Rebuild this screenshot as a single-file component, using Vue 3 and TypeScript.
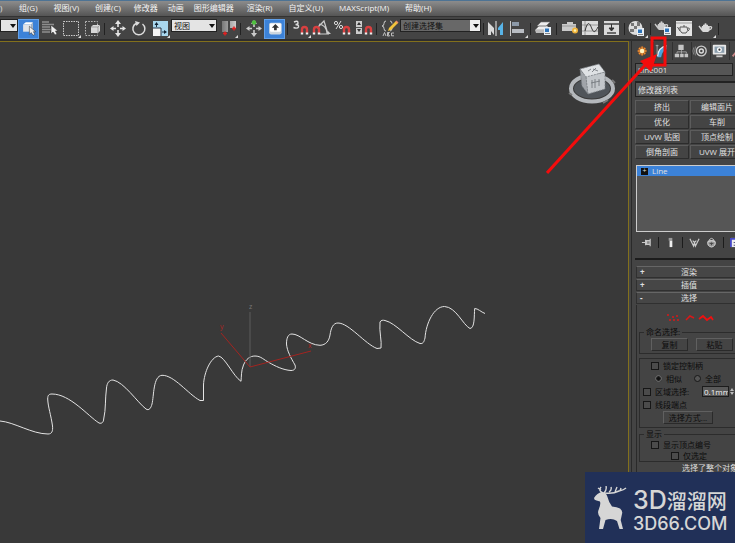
<script setup lang="ts">
import { ref } from 'vue'

interface Tool {
  kind: 'tool' | 'sep' | 'select'
  name?: string
  label?: string
  icon?: string
  active?: boolean
  flyout?: boolean
  options?: string[]
}

const menus = ['组(G)', '视图(V)', '创建(C)', '修改器', '动画', '图形编辑器', '渲染(R)', '自定义(U)', 'MAXScript(M)', '帮助(H)']

const cursor = (x: number, y: number) =>
  `<path transform="translate(${x} ${y})" d="M0 0V9L2 7L4 10L6 9L4.500 6H7Z" fill="#eee" stroke="#333" stroke-width=".6"/>`
const magnet = (x: number, y: number) =>
  `<g transform="translate(${x} ${y})" fill="none"><path d="M1 7V3.500Q1 1 3.500 1T6 3.500V7" stroke="#d84040" stroke-width="2.400"/><path d="M1 6.500V8.500M6 6.500V8.500" stroke="#eee" stroke-width="2.400"/></g>`
const teapot = (x: number, y: number, c: string) =>
  `<g transform="translate(${x} ${y})"><path d="M3 4H10Q12 8 9 10H4Q1 8 3 4Z" fill="${c}"/><path d="M3 8L0 4M10 5Q14 4 12 7L10 8M4 3.500H9" fill="none" stroke="${c}" stroke-width="1.300"/><circle cx="6.500" cy="2.300" r="1.100" fill="${c}"/></g>`
const badge = (x: number, y: number) =>
  `<g transform="translate(${x} ${y})"><rect width="7" height="8" fill="#e8eef4"/><rect x="1" y="1.500" width="4" height="3.500" fill="#2e74b8"/><path d="M1 6.500H6" stroke="#888"/></g>`
const moveArrows = (c: string) =>
  `<path d="M11 5V8M11 11V14M6 9.500H9M13 9.500H16" stroke="${c}" stroke-width="1.600"/><path d="M11 1L14 5H8ZM11 18L14 14H8ZM3 9.500L6.500 7V12ZM19 9.500L15.500 7V12Z" fill="${c}"/>`

const icons: Record<string, string> = {
  pick: `<path d="M4 5L7 2.500H15L13 5Z" fill="#fff"/><path d="M4 5H13V13H4Z" fill="#dfe3e8"/><path d="M13 5L15 2.500V11L13 13Z" fill="#a9b6c4"/>${cursor(11, 7)}`,
  list: `<path d="M3 3H10M3 5.500H15M3 8H11M3 10.500H13M3 13H11" stroke="#8e8e8e" stroke-width="1.300"/>${cursor(12, 6)}`,
  region: `<rect x="3.500" y="2.500" width="15" height="14" fill="none" stroke="#ccc" stroke-dasharray="1.500 1"/>`,
  crossing: `<rect x="4.500" y="2.500" width="12" height="14" fill="none" stroke="#bbb" stroke-dasharray="1.500 1.300"/><path d="M10 8L12 6H19V12L17 14H10Z" fill="#d8d8d8"/><path d="M10 8H17V14M17 8L19 6" fill="none" stroke="#888" stroke-width=".7"/>`,
  move: moveArrows('#e4e4e4'),
  rotate: `<path d="M14.500 5A6 6 0 1 1 8 4.500" fill="none" stroke="#ddd" stroke-width="1.500"/><path d="M7 2L12 3.500L8.500 7Z" fill="#ddd"/>`,
  scale: `<rect x="4" y="2" width="15" height="15" fill="#a9d7ee"/><rect x="4" y="9" width="8" height="8" fill="#f4f4f4"/><path d="M4 9H12V17M7.500 8V5M13 13H16" fill="none" stroke="#234" stroke-width="1"/><path d="M7.500 3L9.500 6H5.500ZM18 13L15 11V15Z" fill="#123"/>`,
  pivot: `<defs><linearGradient id="pv"><stop stop-color="#777"/><stop offset="1" stop-color="#ccc"/></linearGradient></defs><path d="M5 2H11V13H5ZM13 2H19V9H13Z" fill="url(#pv)"/><path d="M8 12.500V16.500M6 14.500H10M17 7.500V11.500M15 9.500H19" stroke="#e02020" stroke-width="1.500"/>`,
  manipulate: `${moveArrows('#ccc')}<circle cx="11" cy="3.500" r="2.300" fill="#4fbf3f"/>`,
  keyboard: `<rect x="4" y="3" width="14" height="13" rx="2" fill="#ccd6df"/><rect x="5" y="4" width="12" height="9" rx="1" fill="#fff"/><path d="M11 4.500L15 8.500H12.500V11.500H9.500V8.500H7Z" fill="#333"/>`,
  snap3: `<path d="M4 3Q8 1 8 4Q8 5.500 5.500 5.500Q9 5.500 8.500 8Q7.500 10 3.500 8.500" fill="none" stroke="#ddd" stroke-width="1.400"/>${magnet(11, 7)}`,
  snapAngle: `<path d="M6 9L13 2L17 15M9 15H18M8 5Q15 6 16 14" fill="none" stroke="#ccc" stroke-width="1.200"/><path d="M15 15L20 15L17 12Z" fill="#ccc"/>${magnet(2, 7)}`,
  snapPercent: `<circle cx="4" cy="4" r="1.600" fill="none" stroke="#ddd"/><circle cx="9" cy="8" r="1.600" fill="none" stroke="#ddd"/><path d="M9 2L4 10" stroke="#ddd"/>${magnet(11, 7)}`,
  snapSpinner: `<rect x="3" y="2" width="6" height="13" fill="#ccc"/><path d="M6 3L8 6H4ZM6 13L8 10H4Z" fill="#333"/><path d="M3 8.500H9" stroke="#555"/>${magnet(12, 7)}`,
  sets: `<path d="M7 2Q5 2 5 4.500T3 7Q5 7 5 9.500T7 12M11 2Q13 2 13 4.500M11 12Q13 12 13 9" fill="none" stroke="#ccc"/><path d="M10 9L17 2L19 4L12 11L9 12Z" fill="#f0c23c"/><path d="M17 2L19 4" stroke="#e86" stroke-width="1.500"/><path d="M4 17L5.500 13.500L7 17M8.500 13.500V17H10.500L9 15L10.500 13.500H8.500M15 14H12.500V16.800H15" fill="none" stroke="#ccc" stroke-width=".9"/>`,
  mirror: `<path d="M2 3L8 9V16L5 12V16H2Z" fill="#d9d9d9"/><path d="M17 3L12 9V11H14V16H17Z" fill="#58b4e8"/><path d="M10 2V17" stroke="#eee"/>`,
  align: `<path d="M3.500 2V17" stroke="#ccc"/><path d="M5 3H12V7H5Z" fill="#8c99a8"/><path d="M5 10H17V14H5Z" fill="#b8bcc2"/>`,
  layers: `<path d="M8 3H17L13 7H4ZM6 7H15L11 11H2Z" fill="#eee" stroke="#777" stroke-width=".6"/><path d="M2 11L11 11L15 7V10L11 14H3Z" fill="#bbb"/>${badge(11, 8)}`,
  ribbon: `<path d="M3 5H8V3H14V5H17V12H3Z" fill="#c9c9c9"/><path d="M3 7H17" stroke="#999"/><circle cx="16" cy="11.500" r="3" fill="#f0b43c"/><circle cx="16" cy="11.500" r="1.200" fill="#fff4b0"/>`,
  curves: `<rect x="2" y="2" width="16" height="14" fill="#dcdcdc"/><path d="M5 2V16M2 6H18M2 12H18" stroke="#888" stroke-width=".8"/><path d="M5 12C8 0 10 5 12 10S16 12 18 8" fill="none" stroke="#333"/>`,
  schematic: `<rect x="3" y="2" width="15" height="14" fill="#dadada"/><path d="M3 5H18M6 14H15" stroke="#444" stroke-width="1.500"/><path d="M10.500 5V10M8 9H13L10.500 12Z" stroke="#333" fill="#333"/>`,
  material: `<circle cx="8.500" cy="9" r="7" fill="#ddd"/><path d="M4 4H7V7H4ZM10 3H13V7H10ZM7 7H10V10H7ZM3 10H7V13H3ZM10 10H13V14H10Z" fill="#777"/>${badge(10, 9)}`,
  renderSetup: `${teapot(2, 1, '#ccc')}${badge(11, 8)}`,
  renderFrame: `<rect x="2" y="2" width="16" height="15" fill="#e4e4e4"/><path d="M2 4H18" stroke="#999"/><g fill="none" stroke="#555"><path d="M6 8H13Q15 12 12 14H8Q5 12 6 8ZM6 12L3.500 8M14 9Q17 9 14 12M9 7H11"/></g>`,
  render: teapot(4, 3, '#d8d8d8'),
}

const t = (name: string, label: string, extra: Partial<Tool> = {}): Tool => ({ kind: 'tool', name, label, icon: icons[name], ...extra })
const sep: Tool = { kind: 'sep' }

const tools: Tool[] = [
  { kind: 'select', name: 'filter', label: '选择过滤器', options: [''] },
  t('pick', '选择对象', { active: true }), t('list', '按名称选择'), t('region', '选择区域', { flyout: true }), t('crossing', '窗口/交叉'), sep,
  t('move', '移动'), t('rotate', '旋转'), t('scale', '缩放', { flyout: true }),
  { kind: 'select', name: 'coords', label: '参考坐标系', options: ['视图', '屏幕', '世界'] },
  t('pivot', '轴点中心', { flyout: true }), sep,
  t('manipulate', '选择并操纵'), t('keyboard', '快捷键覆盖', { active: true }), sep,
  t('snap3', '捕捉开关', { flyout: true }), t('snapAngle', '角度捕捉'), t('snapPercent', '百分比捕捉'), t('snapSpinner', '微调器捕捉'), sep,
  t('sets', '编辑命名选择集'),
  { kind: 'select', name: 'named', label: '命名选择集', options: ['创建选择集'] }, sep,
  t('mirror', '镜像'), t('align', '对齐', { flyout: true }), sep,
  t('layers', '层管理器'), sep,
  t('ribbon', '石墨工具'), t('curves', '曲线编辑器'), t('schematic', '图解视图'), sep,
  t('material', '材质编辑器', { flyout: true }), sep,
  t('renderSetup', '渲染设置'), t('renderFrame', '渲染帧窗口'), t('render', '渲染产品', { flyout: true }), sep,
]

const tabs = [
  { label: '创建', icon: '<circle cx="8" cy="9" r="5" fill="#c8601c" opacity=".5"/><path d="M8 4V14M3 9H13M4.500 5.500L11.500 12.500M11.500 5.500L4.500 12.500" stroke="#f09030" stroke-width="1.600"/><circle cx="8" cy="9" r="2.500" fill="#fff3c0"/>' },
  { label: '修改', icon: '<path d="M4 16Q4 5 14 3V7Q9 9 8 16Z" fill="#4aa3dc"/><path d="M4 15Q5 5 14 3" fill="none" stroke="#e2f2fa" stroke-width="1.500"/><path d="M2 3H5M3.500 2V14" stroke="#aaa"/>' },
  { label: '层次', icon: '<path d="M6 2H12V8H6ZM2 12H7V16H2ZM8 12H12V16H8ZM13 12H17V16H13Z" fill="#c4c4c4"/><path d="M9.500 8V12M4.500 12V10H15V12" fill="none" stroke="#aaa"/>' },
  { label: '运动', icon: '<circle cx="10.500" cy="9" r="5.500" fill="none" stroke="#ccc" stroke-width="1.500"/><circle cx="10.500" cy="9" r="2.200" fill="none" stroke="#ddd" stroke-width="1.600"/><path d="M2 5Q0 9 2 13M4 4Q2 9 4 14" fill="none" stroke="#888"/>' },
  { label: '显示', icon: '<rect x="2" y="2" width="15" height="11" rx="1" fill="#e8e8e8"/><rect x="4" y="4" width="11" height="7" fill="#8a9dac"/><circle cx="9.500" cy="7.500" r="2.800" fill="#fff"/><circle cx="9.500" cy="7.500" r="1.200" fill="#333"/><path d="M6 15H13" stroke="#ccc" stroke-width="2"/>' },
  { label: '实用程序', icon: '<path d="M3 15L10 6" stroke="#c88" stroke-width="2"/><path d="M8 3L14 7" stroke="#ccc" stroke-width="3"/>' },
]

const modifiers = ['挤出', '编辑面片', '优化', '车削', 'UVW 贴图', '顶点绘制', '倒角剖面', 'UVW 展开']
const objectName = ref('Line001')
const threshold = ref('0.1mm')
const handleMode = ref('similar')
</script>

<template>
  <div class="app">
    <nav class="menubar">
      <span class="menu-tail">)</span>
      <a v-for="m in menus" :key="m" href="#" :class="{ keyed: m.includes('(') }">{{ m }}</a>
    </nav>

    <div class="toolbar">
      <template v-for="(tool, i) in tools" :key="i">
        <span v-if="tool.kind === 'sep'" class="sep"></span>
        <span v-else-if="tool.kind === 'select'" class="drop" :class="tool.name">
          <select :aria-label="tool.label">
            <option v-for="o in tool.options" :key="o">{{ o }}</option>
          </select>
        </span>
        <button v-else type="button" class="tool" :class="{ active: tool.active, flyout: tool.flyout }" :aria-label="tool.label">
          <svg viewBox="0 0 20 20" v-html="tool.icon"></svg>
        </button>
      </template>
    </div>

    <div class="workspace">
      <main class="viewport">
        <svg class="scene" viewBox="0 42 628 501" preserveAspectRatio="xMinYMin meet">
          <path class="spline" d="M0 421C14 422 32 434 48 434C52 434 53 431 52.500 426C51 415 48 407 47.700 399C47.700 395 49 394 52 394C70 394 88 416 99 423C102 424 103.500 422 103.700 419C106 409 105 399 106.500 388C107 383 109 380 113 380C124 382 137 402 146 409C149 411 151 408 152 404C154 396 153 376 162 375.300C174 375 188 394 200 400.500H203.500V385C204 372 211 357 218.500 356C225 357 233 376 241 381.300C241.500 377 241 371 243.500 365C246 359 250 356 255 356C261 356 264 360 269 362.500C275 366 283 370 291 370.500C295 370.500 296 368 295 365C291 358 287 351 286.500 344C286.500 338 288 334 292 334C300 334 308 345 320 345.300C326 345 329 341 330 335C331 328 333 323 338 323C349 323 365 344 377 348.500L381 348C382 341 379 332 380 322C381 320 383 320 385 320.500C396 323 409 340 420 343.500C423 344 424 342 425 338C426 323 434 306.500 444.500 306.500C456 307 463 325 470 328.500C475 328 474 316 474.700 308.500C478 308.500 481 312 485 313.500"/>
          <path class="axis-z" d="M250 312V367"/>
          <path class="axis" d="M221 333L250 367L311 351"/>
          <text class="axis-name" x="220" y="329">y</text>
          <text class="axis-name" x="308" y="348">x</text>
          <text class="axis-name dim" x="249" y="309">z</text>
          <g>
            <ellipse cx="592" cy="88.500" rx="21" ry="13" fill="none" stroke="#b4b8bc" stroke-width="4"/>
            <ellipse cx="592" cy="88.500" rx="18" ry="10" fill="#50555a"/>
            <path d="M580 69L599 64L605 72L586 77Z" fill="#dfe2e5"/>
            <path d="M580 69L586 77L588 94L582 86Z" fill="#a0a4a9"/>
            <path d="M586 77L605 72L605 89L588 94Z" fill="#c3c7cb"/>
            <path d="M580 69L599 64L605 72L605 89L588 94L582 86ZM580 69L586 77L605 72M586 77L588 94" fill="none" stroke="#7c8186" stroke-width=".8" stroke-dasharray="2 1"/>
            <path d="M588 71L591 69M592 72L596 68M593 69L598 71M592 80V88M595 79V88M599 79V86M591 83L600 81" stroke="#6c7176" stroke-width=".8"/>
            <path d="M569 93L572 95M603 103L608 100M612 80L615 83" stroke="#777" stroke-width="2"/>
          </g>
        </svg>
      </main>

      <aside class="panel">
        <div class="panel-inner">
          <div class="tabs">
            <button v-for="tab in tabs" :key="tab.label" type="button" :aria-label="tab.label">
              <svg viewBox="0 0 18 18" v-html="tab.icon"></svg>
            </button>
          </div>
          <div class="name-row">
            <input v-model="objectName" type="text" aria-label="对象名称">
            <span class="swatch"></span>
          </div>
          <select class="modlist" aria-label="修改器列表"><option>修改器列表</option></select>
          <div class="mods">
            <button v-for="m in modifiers" :key="m" type="button">{{ m }}</button>
          </div>
          <div class="stack">
            <button type="button" class="stack-item"><span class="plus">+</span>Line</button>
          </div>
          <div class="stack-tools">
            <button type="button" aria-label="锁定堆栈"><svg viewBox="0 0 12 12"><path d="M1 6H5M5 3V9M6 4H10V8H6ZM10 2V10" fill="#888" stroke="#c8c8c8" stroke-width="1.300"/></svg></button>
            <i></i>
            <button type="button" aria-label="显示最终结果"><svg viewBox="0 0 12 12"><path d="M4 1H8V4H4Z" fill="#999"/><path d="M5 4H8V11H5Z" fill="#eee"/></svg></button>
            <i></i>
            <button type="button" aria-label="使唯一"><svg viewBox="0 0 12 12"><path d="M1 2L5 10L6 6L7 10L11 2M4 4L6 6L8 4" fill="none" stroke="#ccc" stroke-width="1.300"/></svg></button>
            <button type="button" aria-label="移除修改器"><svg viewBox="0 0 12 12"><path d="M2 5Q6 3 10 5Q11 10 6 11Q1 10 2 5Z" fill="#999" stroke="#ddd"/><path d="M3 4Q6 -1 9 4Z" fill="none" stroke="#ccc"/><path d="M4 7H8M6 6V9" stroke="#444"/></svg></button>
            <i></i>
            <button type="button" aria-label="配置修改器集"><svg viewBox="0 0 12 12"><path d="M1 1H12V11H1Z" fill="#eee"/><path d="M1 2H12M1 1V11" stroke="#4648c8" stroke-width="2"/><path d="M4 6H10M4 9H8" stroke="#447"/></svg></button>
          </div>

          <div class="rollouts">
            <button type="button" class="rollout"><b>+</b>渲染</button>
            <button type="button" class="rollout"><b>+</b>插值</button>
            <button type="button" class="rollout"><b>-</b>选择</button>
            <section class="body">
              <svg class="levels" viewBox="0 0 48 8">
                <path d="M1 1H3M6 3H8M3 6H5M10 2H12M11 6H13M7 6H9" stroke="#d81818" stroke-width="1.300"/>
                <path d="M20 6L24 2L28 4" fill="none" stroke="#d81818" stroke-width="1.600"/>
                <path d="M33 5L37 2L41 6L45 3L47 6" fill="none" stroke="#f01010" stroke-width="1.800"/>
              </svg>
              <fieldset>
                <legend>命名选择:</legend>
                <div class="pair"><button type="button">复制</button><button type="button">粘贴</button></div>
              </fieldset>
              <fieldset class="options">
                <label class="in1"><input type="checkbox">锁定控制柄</label>
                <div class="radios">
                  <label><input v-model="handleMode" type="radio" value="similar">相似</label>
                  <label><input v-model="handleMode" type="radio" value="all">全部</label>
                </div>
                <div class="area">
                  <label><input type="checkbox">区域选择:</label>
                  <input v-model="threshold" type="text" aria-label="区域阈值"><span class="spin"></span>
                </div>
                <label class="in0"><input type="checkbox">线段端点</label>
                <button type="button" class="mode">选择方式...</button>
              </fieldset>
              <fieldset class="show">
                <legend>显示</legend>
                <label class="in1"><input type="checkbox">显示顶点编号</label>
                <label class="in2"><input type="checkbox">仅选定</label>
              </fieldset>
              <p class="status">选择了整个对象</p>
            </section>
          </div>
        </div>
      </aside>
    </div>

    <svg class="arrow" viewBox="0 0 122 142">
      <rect x="106" y="3" width="13" height="27"/>
      <path d="M1 138L102 27"/>
      <path class="head" d="M111 19L94 26L105 37Z"/>
    </svg>

    <div class="brand">
      <svg viewBox="0 0 34 46">
        <path d="M1 12Q4 7 9 6Q13 6 14.500 11Q16 17 19 20.500Q24 21 27 22.500Q30 25 29 28L27.700 34L30 43H26.500L24 35Q19 31.500 12.500 34L10 43H6L7.500 32Q4 28 5.500 24Q8 19 7 15.500L3.500 14.500Q1 14 1 12Z" fill="#d6d6d6"/>
        <path d="M10 7Q5 5 8 1M8 4L5 2M11 7Q14 4 13 0M12 7Q20 8 26 5Q31 4 33 2M16 6Q19 4 18 1M22 6L24 1M27 5L28 2" fill="none" stroke="#d6d6d6" stroke-width="1.400"/>
      </svg>
      <div class="brand-text">
        <span class="brand-name"><b>3D</b>溜溜网</span>
        <span class="brand-site">3D66.COM</span>
      </div>
    </div>
  </div>
</template>

<style>
body { margin: 0; background: #393939; }
</style>

<style scoped>
* { box-sizing: border-box; }
.app {
  position: relative; display: flex; flex-direction: column; height: 100vh; overflow: hidden;
  background: #444; color: #e0e0e0;
  font-family: "Open Sans", "Noto Sans CJK SC", sans-serif; font-size: 8px; line-height: 12px;
}
button, input, select { font: inherit; color: inherit; margin: 0; padding: 0; border: 0; border-radius: 0; background: none; }
svg { display: block; }

.menubar {
  display: flex; flex: none; gap: 10px; height: 16px; padding-top: 1px; white-space: nowrap;
  border-top: 1px solid #4d7394; background: linear-gradient(#8c8c8c, #555);
}
.menubar a { color: #f4f4f4; text-decoration: none; }
.menubar .keyed { padding: 0 3px; }
.menu-tail { width: 6px; }

.toolbar { display: flex; flex: none; height: 25px; padding-top: 2px; border-top: 1px solid #333; border-bottom: 2px solid #2e2e2e; background: #444; }
.tool { position: relative; flex: none; width: 21px; height: 20px; }
.tool svg { width: 20px; height: 20px; }
.tool.active { background: #3c82d8; border: 1px solid #62a0e8; }
.tool.active svg { width: 19px; height: 18px; }
.tool.flyout::after { content: ""; position: absolute; right: 0; bottom: 1px; border: solid transparent; border-width: 3px 0 0 3px; border-bottom: 3px solid #ddd; border-top: 0; }
.sep { flex: none; width: 5px; height: 12px; margin-top: 4px; background: linear-gradient(#222, #222) center / 1px 100% no-repeat; }
.drop { position: relative; flex: none; height: 13px; }
.drop select { display: block; width: 100%; height: 13px; padding-left: 2px; appearance: none; border: 1px solid #222; background: #686868; color: #111; line-height: 11px; }
.drop::after { content: ""; position: absolute; right: 2px; top: 5px; border: 3px solid transparent; border-top: 4px solid #111; border-bottom: 0; }
.filter { width: 18px; }
.filter select, .coords select { background: #e4e4e4; }
.coords { width: 46px; margin-left: 1px; }
.named { width: 81px; }
.named::before { content: ""; position: absolute; right: 1px; top: 1px; width: 10px; height: 11px; background: #eee; }

.workspace { display: flex; flex: 1; min-height: 0; }
.viewport { flex: 1; min-width: 0; background: #393939; border-top: 1px solid #82701c; border-right: 1px solid #82701c; }
.scene { width: 100%; height: 100%; }
.spline { fill: none; stroke: #e4e4e4; stroke-width: 1; }
.axis { fill: none; stroke: #a32420; }
.axis-z { stroke: #5c5c5c; }
.axis-name { font-size: 7px; fill: #b02420; }
.axis-name.dim { fill: #777; }

.panel { flex: none; width: 106px; padding-left: 2px; overflow: hidden; }
.panel-inner { width: 114px; height: 100%; padding-left: 3px; border-left: 1px solid #2a2a2a; }
.tabs { display: flex; height: 21px; padding-top: 1px; }
.tabs button { flex: none; width: 19px; height: 18px; border-right: 1px solid #303030; }
.tabs svg { width: 16px; height: 16px; }
.name-row { display: flex; gap: 2px; height: 14px; margin-top: 1px; }
.name-row input { width: 98px; height: 13px; padding-left: 2px; background: #565656; border: 1px solid #222; }
.swatch { width: 10px; background: #555; border: 1px solid #222; }
.modlist { display: block; width: 111px; height: 16px; margin-top: 4px; padding-left: 2px; appearance: none; background: #575757; border: 1px solid #222; border-top-width: 2px; }
.mods { display: grid; grid-template-columns: 54px 54px; gap: 1px; margin-top: 3px; }
.mods button { height: 14px; line-height: 12px; background: #444; border: 1px solid #2c2c2c; border-top-color: #5c5c5c; border-left-color: #5c5c5c; white-space: nowrap; }
.stack { height: 67px; margin: 6px 0 0 1px; background: #565656; border: 1px solid #ccc; }
.stack-item { display: flex; align-items: center; gap: 4px; width: 100%; height: 10px; padding-left: 4px; background: #3c82d8; line-height: 10px; }
.plus { width: 7px; height: 7px; background: #111; font-size: 7px; line-height: 6px; text-align: center; }
.stack-tools { display: flex; align-items: center; height: 20px; padding-left: 6px; gap: 6px; }
.stack-tools button, .stack-tools svg { flex: none; width: 11px; height: 11px; }
.stack-tools i { flex: none; width: 1px; height: 11px; background: #1c1c1c; }

.rollouts { margin-top: 6px; padding-top: 6px; border-top: 2px solid #1c1c1c; }
.rollout { position: relative; display: block; width: 106px; height: 12px; margin: 0 0 1px 1px; line-height: 10px; text-align: center; border: 1px solid #303030; border-top-color: #666; background: #464646; }
.rollout b { position: absolute; left: 3px; top: 0; }
.body { margin-left: 1px; padding: 9px 0 0 2px; border-left: 1px solid #2a2a2a; color: #0c0c0c; }
.levels { width: 48px; height: 8px; margin-left: 27px; }
fieldset { width: 106px; min-width: 0; margin: 4px 0 0; padding: 0 2px 2px; border: 1px solid #2c2c2c; }
legend { padding: 0 2px; margin-left: 2px; line-height: 12px; }
.pair { display: flex; gap: 8px; padding-left: 9px; }
.pair button, .mode { width: 37px; height: 13px; line-height: 11px; border: 1px solid #2a2a2a; border-top-color: #606060; border-left-color: #606060; }
label { display: flex; align-items: center; gap: 4px; height: 13px; white-space: nowrap; }
input[type=checkbox] { flex: none; width: 8px; height: 8px; appearance: none; border: 1px solid #161616; background: #4b4b4b; }
input[type=radio] { flex: none; width: 7px; height: 7px; appearance: none; border: 1px solid #181818; border-radius: 50%; background: #555; }
input[type=radio]:checked { background: #111; border: 2px solid #222; outline: 1px solid #777; outline-offset: -1px; }
.options { padding-bottom: 3px; }
.in0 { margin-left: 1px; }
.in1 { margin-left: 9px; }
.in2 { margin-left: 29px; }
.radios { display: flex; gap: 12px; padding-left: 13px; }
.area { display: flex; align-items: center; gap: 1px; padding-left: 1px; }
.area label { width: 58px; }
.area input[type=text] { width: 27px; height: 11px; padding-left: 1px; background: #595959; border: 1px solid #1c1c1c; color: #f4f4f4; line-height: 9px; }
.spin::before, .spin::after { content: ""; display: block; width: 0; border: 2px solid transparent; border-bottom: 3px solid #bbb; border-top: 0; }
.spin::after { margin-top: 1px; border-top: 3px solid #bbb; border-bottom: 0; }
.mode { display: block; width: 50px; margin-left: 21px; }
.show { margin-top: 1px; padding-bottom: 0; }
.show legend { line-height: 10px; }
.show label { height: 11px; }
.status { margin: 0 0 0 43px; color: #ddd; white-space: nowrap; }

.arrow { position: absolute; right: 67px; top: 35px; width: 122px; height: 142px; fill: none; stroke: #f40c0c; stroke-width: 3; }
.arrow .head { fill: #f40c0c; stroke: none; }

.brand { position: absolute; right: 0; bottom: 0; display: flex; gap: 6px; width: 150px; height: 71px; padding: 14px 0 0 8px; background: #213058; color: #d6d6d6; white-space: nowrap; }
.brand svg { flex: none; width: 34px; height: 46px; }
.brand-text { display: flex; flex-direction: column; }
.brand-name { font-size: 20px; font-weight: 500; line-height: 28px; }
.brand-name b { font: 500 25px/28px Inter, sans-serif; }
.brand-site { font: 500 18px/16px Inter, sans-serif; }
</style>
